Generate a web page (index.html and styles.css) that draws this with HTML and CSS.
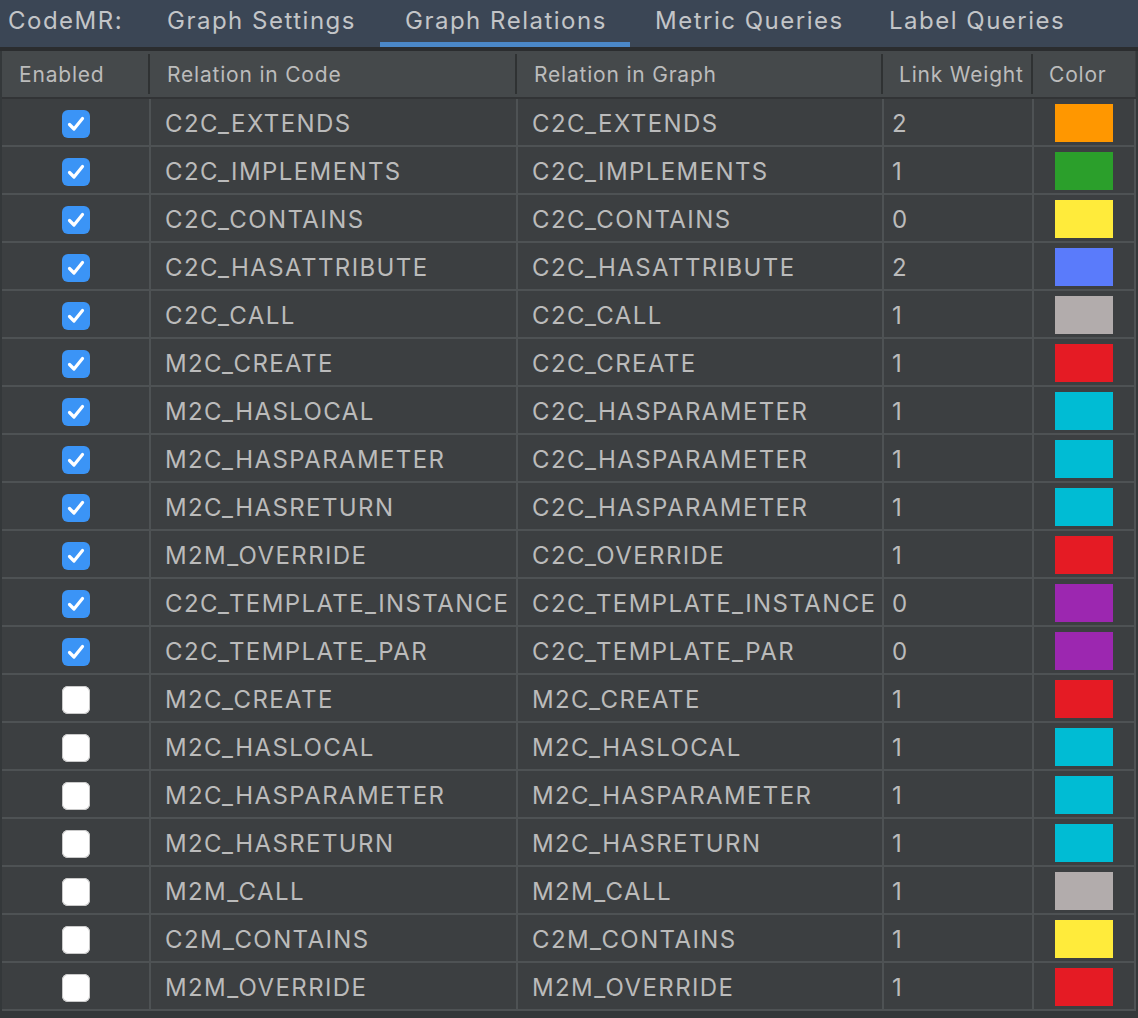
FILE: index.html
```html
<!DOCTYPE html>
<html>
<head>
<meta charset="utf-8">
<link rel="stylesheet" href="styles.css">
</head>
<body>
<div class="tabbar">
  <span class="brand">CodeMR:</span>
  <span class="tab t1">Graph Settings</span>
  <span class="tab t2 active">Graph Relations</span>
  <span class="tab t3">Metric Queries</span>
  <span class="tab t4">Label Queries</span>
</div>
<div class="gap"></div>
<table class="grid">
  <colgroup>
    <col class="c1"><col class="c2"><col class="c3"><col class="c4"><col class="c5">
  </colgroup>
  <thead>
    <tr>
      <th class="h-en"><span class="hsep">Enabled</span></th>
      <th><span class="hsep">Relation in Code</span></th>
      <th><span class="hsep">Relation in Graph</span></th>
      <th class="h-lw"><span class="hsep">Link Weight</span></th>
      <th class="h-col"><span>Color</span></th>
    </tr>
  </thead>
  <tbody>
    <tr><td class="cb"><span class="box on"><svg viewBox="0 0 28 28"><path d="M7.5 14.5 L12 19 L20.5 8.5"/></svg></span></td><td>C2C_EXTENDS</td><td>C2C_EXTENDS</td><td class="lw">2</td><td class="sw"><span class="swatch orange"></span></td></tr>
    <tr><td class="cb"><span class="box on"><svg viewBox="0 0 28 28"><path d="M7.5 14.5 L12 19 L20.5 8.5"/></svg></span></td><td>C2C_IMPLEMENTS</td><td>C2C_IMPLEMENTS</td><td class="lw">1</td><td class="sw"><span class="swatch green"></span></td></tr>
    <tr><td class="cb"><span class="box on"><svg viewBox="0 0 28 28"><path d="M7.5 14.5 L12 19 L20.5 8.5"/></svg></span></td><td>C2C_CONTAINS</td><td>C2C_CONTAINS</td><td class="lw">0</td><td class="sw"><span class="swatch yellow"></span></td></tr>
    <tr><td class="cb"><span class="box on"><svg viewBox="0 0 28 28"><path d="M7.5 14.5 L12 19 L20.5 8.5"/></svg></span></td><td>C2C_HASATTRIBUTE</td><td>C2C_HASATTRIBUTE</td><td class="lw">2</td><td class="sw"><span class="swatch blue"></span></td></tr>
    <tr><td class="cb"><span class="box on"><svg viewBox="0 0 28 28"><path d="M7.5 14.5 L12 19 L20.5 8.5"/></svg></span></td><td>C2C_CALL</td><td>C2C_CALL</td><td class="lw">1</td><td class="sw"><span class="swatch grey"></span></td></tr>
    <tr><td class="cb"><span class="box on"><svg viewBox="0 0 28 28"><path d="M7.5 14.5 L12 19 L20.5 8.5"/></svg></span></td><td>M2C_CREATE</td><td>C2C_CREATE</td><td class="lw">1</td><td class="sw"><span class="swatch red"></span></td></tr>
    <tr><td class="cb"><span class="box on"><svg viewBox="0 0 28 28"><path d="M7.5 14.5 L12 19 L20.5 8.5"/></svg></span></td><td>M2C_HASLOCAL</td><td>C2C_HASPARAMETER</td><td class="lw">1</td><td class="sw"><span class="swatch cyan"></span></td></tr>
    <tr><td class="cb"><span class="box on"><svg viewBox="0 0 28 28"><path d="M7.5 14.5 L12 19 L20.5 8.5"/></svg></span></td><td>M2C_HASPARAMETER</td><td>C2C_HASPARAMETER</td><td class="lw">1</td><td class="sw"><span class="swatch cyan"></span></td></tr>
    <tr><td class="cb"><span class="box on"><svg viewBox="0 0 28 28"><path d="M7.5 14.5 L12 19 L20.5 8.5"/></svg></span></td><td>M2C_HASRETURN</td><td>C2C_HASPARAMETER</td><td class="lw">1</td><td class="sw"><span class="swatch cyan"></span></td></tr>
    <tr><td class="cb"><span class="box on"><svg viewBox="0 0 28 28"><path d="M7.5 14.5 L12 19 L20.5 8.5"/></svg></span></td><td>M2M_OVERRIDE</td><td>C2C_OVERRIDE</td><td class="lw">1</td><td class="sw"><span class="swatch red"></span></td></tr>
    <tr><td class="cb"><span class="box on"><svg viewBox="0 0 28 28"><path d="M7.5 14.5 L12 19 L20.5 8.5"/></svg></span></td><td>C2C_TEMPLATE_INSTANCE</td><td>C2C_TEMPLATE_INSTANCE</td><td class="lw">0</td><td class="sw"><span class="swatch purple"></span></td></tr>
    <tr><td class="cb"><span class="box on"><svg viewBox="0 0 28 28"><path d="M7.5 14.5 L12 19 L20.5 8.5"/></svg></span></td><td>C2C_TEMPLATE_PAR</td><td>C2C_TEMPLATE_PAR</td><td class="lw">0</td><td class="sw"><span class="swatch purple"></span></td></tr>
    <tr><td class="cb"><span class="box"></span></td><td>M2C_CREATE</td><td>M2C_CREATE</td><td class="lw">1</td><td class="sw"><span class="swatch red"></span></td></tr>
    <tr><td class="cb"><span class="box"></span></td><td>M2C_HASLOCAL</td><td>M2C_HASLOCAL</td><td class="lw">1</td><td class="sw"><span class="swatch cyan"></span></td></tr>
    <tr><td class="cb"><span class="box"></span></td><td>M2C_HASPARAMETER</td><td>M2C_HASPARAMETER</td><td class="lw">1</td><td class="sw"><span class="swatch cyan"></span></td></tr>
    <tr><td class="cb"><span class="box"></span></td><td>M2C_HASRETURN</td><td>M2C_HASRETURN</td><td class="lw">1</td><td class="sw"><span class="swatch cyan"></span></td></tr>
    <tr><td class="cb"><span class="box"></span></td><td>M2M_CALL</td><td>M2M_CALL</td><td class="lw">1</td><td class="sw"><span class="swatch grey"></span></td></tr>
    <tr><td class="cb"><span class="box"></span></td><td>C2M_CONTAINS</td><td>C2M_CONTAINS</td><td class="lw">1</td><td class="sw"><span class="swatch yellow"></span></td></tr>
    <tr><td class="cb"><span class="box"></span></td><td>M2M_OVERRIDE</td><td>M2M_OVERRIDE</td><td class="lw">1</td><td class="sw"><span class="swatch red"></span></td></tr>
  </tbody>
</table>
</body>
</html>
```

FILE: styles.css
```css
html, body {
  margin: 0;
  padding: 0;
  background: #34383a;
  font-family: Inter, "Liberation Sans", sans-serif;
  color: #bbbbbb;
}

.tabbar {
  height: 47px;
  background: #3b4655;
  display: flex;
  align-items: stretch;
  box-sizing: border-box;
  font-size: 24px;
  letter-spacing: 1.5px;
  color: #c3c5c8;
}

.brand {
  padding-left: 8px;
  width: 167px;
  box-sizing: border-box;
  line-height: 42px;
}

.tab {
  box-sizing: border-box;
  line-height: 42px;
  border-bottom: 5px solid transparent;
}

.t1 { width: 213px; }
.t2 { width: 250px; padding-left: 25px; }
.t3 { width: 234px; padding-left: 25px; }
.t4 { padding-left: 25px; }

.tab.active {
  border-bottom-color: #4b88c8;
}

.gap {
  height: 4px;
  background: #2b2d2f;
}

.grid {
  border-collapse: collapse;
  table-layout: fixed;
  width: 1133px;
  margin-left: 2px;
  background: #3c3f41;
}

.c1 { width: 148px; }
.c2 { width: 367px; }
.c3 { width: 366px; }
.c4 { width: 150px; }
.c5 { width: 102px; }

thead th {
  background: #45494b;
  height: 46px;
  padding: 0;
  font-weight: normal;
  font-size: 21px;
  letter-spacing: 0.8px;
  text-align: left;
  color: #bcbcbc;
  border-bottom: 2px solid #323436;
}

.hsep {
  display: flex;
  align-items: center;
  height: 40px;
  padding-left: 17px;
  border-right: 2px solid #2f3233;
}

.h-lw .hsep { padding-left: 16px; }
.h-col span { display: block; padding-left: 16px; }

tbody td {
  height: 44px;
  padding: 2px 0 0 14px;
  font-size: 24px;
  letter-spacing: 1.4px;
  border: 2px solid #4e5254;
  border-top: none;
  white-space: nowrap;
  overflow: hidden;
  color: #bbbbbb;
}

tbody td:first-child { border-left: none; }

tbody td.lw { padding-left: 8px; }

tbody td.cb {
  padding: 2px 0 0 0;
  text-align: center;
}

tbody td.sw {
  padding: 2px 0 0 0;
  text-align: center;
}

.box {
  display: inline-block;
  width: 28px;
  height: 28px;
  border-radius: 6px;
  background: #ffffff;
  vertical-align: middle;
  box-shadow: inset 0 0 0 1px #c9c9c9;
}

.box.on {
  background: #3b94f6;
  box-shadow: none;
}

.box svg {
  width: 28px;
  height: 28px;
  display: block;
}

.box svg path {
  fill: none;
  stroke: #ffffff;
  stroke-width: 3.2;
  stroke-linecap: round;
  stroke-linejoin: round;
}

.swatch {
  display: inline-block;
  width: 58px;
  height: 38px;
  vertical-align: middle;
}

.orange { background: #ff9700; }
.green { background: #2b9f2b; }
.yellow { background: #ffeb3b; }
.blue { background: #5a7bfb; }
.grey { background: #b2acac; }
.red { background: #e51b24; }
.cyan { background: #00bcd4; }
.purple { background: #9c27b0; }
```
